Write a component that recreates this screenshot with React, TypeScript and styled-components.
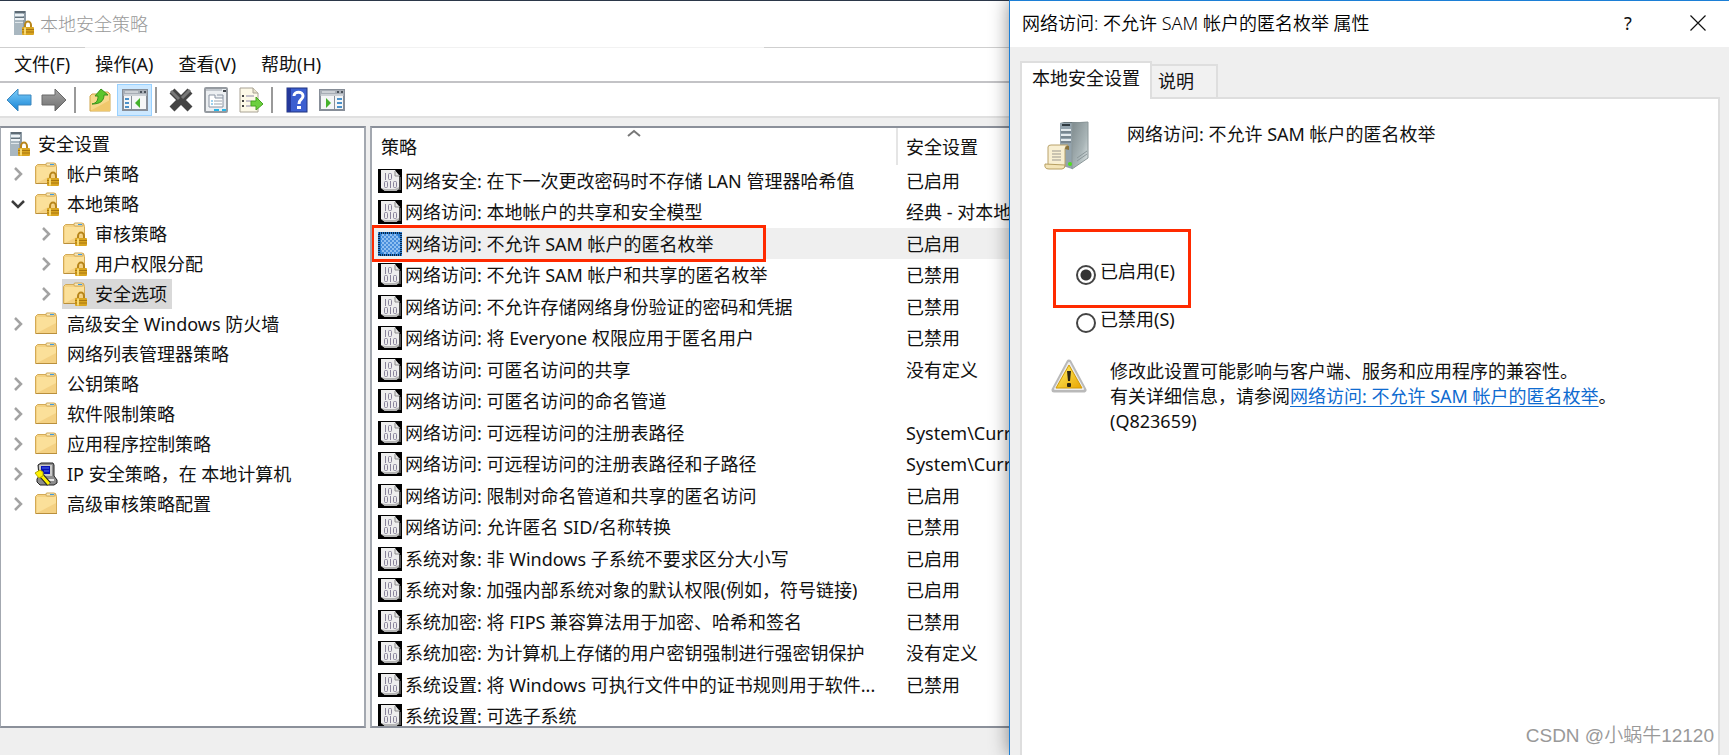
import React from "react";
import styled, { createGlobalStyle } from "styled-components";

const GlobalStyle = createGlobalStyle`
  * { box-sizing: border-box; }
  html, body { margin: 0; padding: 0; }
  body {
    font-family: "Noto Sans", "Noto Sans CJK SC", sans-serif;
    font-size: 18px;
    line-height: 24px;
    color: #111;
    background: #efefef;
  }
  button, input { font: inherit; color: inherit; }
`;

/* ---------- icons ---------- */

const LockShape = ({ x, y }: { x: number; y: number }) => (
  <g transform={`translate(${x} ${y})`}>
    <path d="M3 7V4a3 3.4 0 0 1 6 0v3" fill="none" stroke="#b8861b" strokeWidth="2" />
    <rect x="0" y="6" width="12" height="8" rx="1" fill="#d9a520" />
    <path d="M0 8.500h12M0 11h12" stroke="#a9770f" strokeWidth="1" />
    <rect x="2" y="6.500" width="2" height="7" fill="#f6d873" />
  </g>
);

const ServerLockIcon = () => (
  <svg width="22" height="26" viewBox="0 0 22 26" aria-hidden="true">
    <rect x="1" y="1" width="12" height="24" fill="#8e9ba5" />
    <rect x="1" y="1" width="9" height="24" fill="#a9b7c0" />
    <rect x="2" y="1" width="10" height="2" fill="#5d6a74" />
    <rect x="2" y="4" width="9" height="2" fill="#eef3f6" />
    <rect x="2" y="8" width="9" height="2" fill="#eef3f6" />
    <rect x="2" y="12" width="8" height="1" fill="#dfe6ea" />
    <rect x="2" y="7" width="9" height="1" fill="#64727c" />
    <LockShape x={9} y={11} />
  </svg>
);

const FolderIcon = ({ locked }: { locked?: boolean }) => (
  <svg width="26" height="26" viewBox="0 0 26 26" aria-hidden="true">
    <path d="M1.500 5.500l2-2h9v-1h9l1 3v17h-21z" fill="#f4d283" stroke="#d3aa56" />
    <path d="M2 22.500h21" stroke="#b98f3c" />
    <rect x="12" y="2" width="9" height="3" rx="1" fill="#fbeabb" stroke="#cda758" strokeWidth="1" />
    <rect x="16" y="3" width="4" height="1" fill="#3d9be0" />
    <rect x="3" y="6" width="19" height="16" fill="#fbe09a" />
    <path d="M3 22h19V12z" fill="#f4d183" />
    {locked && <LockShape x={13} y={11} />}
  </svg>
);

const IpPolicyIcon = () => (
  <svg width="26" height="26" viewBox="0 0 26 26" aria-hidden="true">
    <path d="M4 4l3-2h12l1 2v11l3 4v3l-3 2H6l-3-3v-3l2-3z" fill="#8d8d8d" stroke="#222" />
    <rect x="5" y="4" width="13" height="11" fill="#c9c9c9" />
    <rect x="7" y="5" width="9" height="8" fill="#0a12b4" />
    <path d="M8 7h7M10 10h5" stroke="#4d6ff2" strokeWidth="1" />
    <path d="M12 19h8" stroke="#e6e6e6" strokeWidth="2" />
    <path d="M7 14l8 9" stroke="#222" strokeWidth="5" />
    <path d="M6 13l9 10" stroke="#fff200" strokeWidth="3" />
    <path d="M1 12l5-3 3 2v4l-4 2z" fill="#fff200" stroke="#b1a800" strokeWidth="1" />
  </svg>
);

const PolicyIcon = ({ selected }: { selected?: boolean }) =>
  selected ? (
    <svg width="24" height="24" viewBox="0 0 24 24" aria-hidden="true">
      <defs>
        <pattern id="dither" width="4" height="4" patternUnits="userSpaceOnUse">
          <rect width="4" height="4" fill="#8fc0f2" />
          <rect width="2" height="2" fill="#4a8fdc" />
          <rect x="2" y="2" width="2" height="2" fill="#4a8fdc" />
        </pattern>
      </defs>
      <rect width="24" height="24" fill="#2c7fd2" />
      <rect x="1" y="1" width="22" height="22" fill="none" stroke="#06284e" strokeWidth="2" strokeDasharray="1 1" />
      <path d="M3 2h16l3 5v12l-3 3H6l-3-2z" fill="url(#dither)" />
    </svg>
  ) : (
    <svg width="24" height="24" viewBox="0 0 24 24" aria-hidden="true">
      <rect width="24" height="24" fill="#000" />
      <path d="M3 1h14l4 6v13l-3 2H7l-4-3z" fill="#eee" />
      <path d="M3 19l4 3h11l3-2v-2l-4 2H7z" fill="#b5b5b5" />
      <path d="M17 2v5h5" fill="#e3e3e3" stroke="#8c8c8c" />
      <path d="M22 8v13" stroke="#999" />
      <g fill="none" stroke="#88829a">
        <path d="M7.500 4v7" />
        <rect x="10.500" y="4.500" width="3" height="6" rx="1" />
        <rect x="6.500" y="12.500" width="3" height="6" rx="1" />
        <path d="M12.500 12v7" />
        <rect x="15.500" y="12.500" width="3" height="6" rx="1" />
      </g>
    </svg>
  );

const Chevron = ({ open }: { open?: boolean }) => (
  <svg width="14" height="14" viewBox="0 0 14 14" aria-hidden="true">
    {open ? (
      <path d="M1 4l6 6 6-6" fill="none" stroke="#3c3c3c" strokeWidth="2.500" />
    ) : (
      <path d="M4 1l6 6-6 6" fill="none" stroke="#a3a3a3" strokeWidth="2.500" />
    )}
  </svg>
);

const ArrowIcon = ({ forward }: { forward?: boolean }) => (
  <svg width="26" height="24" viewBox="0 0 26 24" aria-hidden="true">
    <defs>
      <linearGradient id={forward ? "gf" : "gb"} x1="0" y1="0" x2="0" y2="1">
        <stop offset="0" stopColor={forward ? "#a5a5a5" : "#7fd0fb"} />
        <stop offset="1" stopColor={forward ? "#6f6f6f" : "#1682d4"} />
      </linearGradient>
    </defs>
    <path
      d={forward ? "M25 12L14 1v6H1v10h13v6z" : "M1 12L12 1v6h13v10H12v6z"}
      fill={`url(#${forward ? "gf" : "gb"})`}
      stroke={forward ? "#686868" : "#3c87bd"}
      strokeLinejoin="round"
    />
  </svg>
);

const FolderUpIcon = () => (
  <svg width="24" height="26" viewBox="0 0 24 26" aria-hidden="true">
    <path d="M2 9l2-2h6l2-2h8l2 2v17H2z" fill="#f7d88b" stroke="#cfa54b" />
    <path d="M2 24h20V13z" fill="#f0c86c" />
    <path d="M4 17c5-1 6-4 6-8H7l6-7 7 6h-4c0 6-4 9-12 9z" fill="#5cc62c" stroke="#39921a" strokeWidth="1" />
  </svg>
);

const ConsoleIcon = ({ flipped }: { flipped?: boolean }) => (
  <svg width="26" height="22" viewBox="0 0 26 22" aria-hidden="true">
    <rect x="1" y="1" width="24" height="20" fill="#f5f6f7" stroke="#878e98" strokeWidth="2" />
    <rect x="1" y="1" width="24" height="6" fill="#a7adb5" />
    <path d="M3 3h13M2 6h22" stroke="#f1f3f5" />
    <path d="M18 3h2M22 3h2" stroke="#4b525b" strokeWidth="2" />
    <path d={flipped ? "M15.500 7v13" : "M9.500 7v13"} stroke="#878e98" />
    <path d={flipped ? "M18 10h5M18 14h5M18 18h5" : "M3 10h4M3 14h4M3 18h4"} stroke="#4b91c9" strokeWidth="2" />
    <path d={flipped ? "M7 9v10l5-5z" : "M18 9v10l-5-5z"} fill="#45b12a" />
  </svg>
);

const DeleteIcon = () => (
  <svg width="26" height="26" viewBox="0 0 26 26" aria-hidden="true">
    <path d="M4 4l18 18M22 4L4 22" stroke="#444" strokeWidth="7" />
    <path d="M3 4l8 8M22 3l-8 8" stroke="#777" strokeWidth="3" />
  </svg>
);

const PropertiesIcon = () => (
  <svg width="24" height="26" viewBox="0 0 24 26" aria-hidden="true">
    <rect x="1" y="1" width="22" height="24" rx="1" fill="#eceff2" stroke="#969ba1" strokeWidth="2" />
    <path d="M2 3h16" stroke="#c3c8ce" strokeWidth="2" />
    <path d="M19 4h3" stroke="#42474d" strokeWidth="2" />
    <path d="M5 8h6v3h8v9H5z" fill="#fff" stroke="#8a94a3" />
    <path d="M13 8h6v3" fill="none" stroke="#8a94a3" />
    <path d="M7 14h2M7 17h2" stroke="#3ba3dd" strokeWidth="1" />
    <path d="M10 14h8M10 17h8" stroke="#9aa3ad" />
    <path d="M10 23h5M18 23h4" stroke="#25b6ea" strokeWidth="2" />
  </svg>
);

const ExportIcon = () => (
  <svg width="26" height="26" viewBox="0 0 26 26" aria-hidden="true">
    <path d="M2 1h13l5 5v19H2z" fill="#fdf9e8" stroke="#a8a294" />
    <path d="M15 1v5h5" fill="#e7e1cc" stroke="#a8a294" />
    <path d="M4 9h2M4 14h2M4 19h2" stroke="#444" strokeWidth="2" />
    <path d="M8 9h8M8 14h5M8 19h5" stroke="#8c86a8" strokeWidth="1" />
    <path d="M13 14h5v-4l7 7-7 6v-4h-5z" fill="#6cd03f" stroke="#45a320" />
  </svg>
);

const HelpIcon = () => (
  <svg width="22" height="26" viewBox="0 0 22 26" aria-hidden="true">
    <rect x="1" y="1" width="20" height="24" fill="#3c5fd0" stroke="#20347f" />
    <rect x="1" y="1" width="4" height="24" fill="#24389a" />
    <path d="M8 9c0-5 9-5 9 0 0 4-4 3-4 8" fill="none" stroke="#fff" strokeWidth="3" />
    <rect x="11" y="19" width="4" height="3" fill="#fff" />
  </svg>
);

const ServerScrollIcon = () => (
  <svg width="46" height="50" viewBox="0 0 46 50" aria-hidden="true">
    <defs>
      <linearGradient id="side" x1="0" y1="0" x2="1" y2="1">
        <stop offset="0" stopColor="#7d898c" />
        <stop offset="0.6" stopColor="#a9b5b7" />
        <stop offset="1" stopColor="#e6ecec" />
      </linearGradient>
    </defs>
    <path d="M16 2l4-1h24l-16 3H16z" fill="#6b787c" />
    <path d="M16 2h12v46l-12-4z" fill="#93a3ad" />
    <path d="M28 2l16-1v36L28 48z" fill="url(#side)" stroke="#8b9799" strokeWidth="1" />
    <path d="M18 4h8" stroke="#2f3a40" strokeWidth="2" />
    <path d="M17 9h10M17 14h10M17 19h10" stroke="#e3eaed" strokeWidth="2" />
    <path d="M17 11h10M17 16h10M17 21h10" stroke="#5c6a73" />
    <path d="M33 40l10-7M33 37l10-7" stroke="#8a9699" />
    <path d="M4 26q0-2 3-2h17q-3 1-3 4v18H4z" fill="#f8efd2" stroke="#b9a26a" />
    <path d="M21 28q1-4 4-3v4z" fill="#8a733a" />
    <path d="M8 30h9M8 33h9M8 36h9M8 39h9" stroke="#9b978f" />
    <path d="M1 43q-1 5 4 5h13q3 0 3-4z" fill="#f3e4b7" stroke="#b79f62" />
    <circle cx="26" cy="43" r="2" fill="#4fe01c" />
  </svg>
);

const WarningIcon = () => (
  <svg width="36" height="34" viewBox="0 0 36 34" aria-hidden="true">
    <defs>
      <linearGradient id="warn" x1="0" y1="0" x2="1" y2="1">
        <stop offset="0" stopColor="#fff36b" />
        <stop offset="1" stopColor="#e9a400" />
      </linearGradient>
    </defs>
    <path d="M18 3L33 31H3z" fill="#b9b9b9" stroke="#b9b9b9" strokeWidth="5" strokeLinejoin="round" />
    <path d="M18 4L32 30H4z" fill="#ececec" stroke="#ececec" strokeWidth="2" strokeLinejoin="round" />
    <path d="M18 6L31 29H5z" fill="url(#warn)" stroke="#d29b08" strokeWidth="1" strokeLinejoin="round" />
    <path d="M16 12h4l-1 10h-2z" fill="#2b2410" />
    <rect x="16" y="24" width="4" height="4" rx="1" fill="#2b2410" />
  </svg>
);

/* ---------- layout ---------- */

const Desktop = styled.div`
  display: grid;
  grid-template-columns: minmax(0, 1009fr) minmax(0, 720fr);
  height: 100vh;
  overflow: hidden;
`;

const ConsoleWindow = styled.main`
  display: flex;
  flex-direction: column;
  min-height: 0;
  overflow: hidden;
  border-top: 1px solid #2b3749;
  background: #efefef;
`;

const ConsoleTitle = styled.header`
  display: flex;
  align-items: center;
  gap: 5px;
  height: 47px;
  padding: 0 0 4px 13px;
  color: #999;
  font-family: "Noto Sans CJK SC", sans-serif;
  font-weight: 300;
  background:
    linear-gradient(90deg, #cfcfcf 0 85px, #f2f2f2 85px 764px, #cfcfcf 764px) bottom / 100% 1px no-repeat,
    #fff;
`;

const MenuBar = styled.nav`
  display: flex;
  gap: 25px;
  height: 35px;
  padding: 0 14px 2px;
  border-bottom: 2px solid #c3c3c6;
  background: #fff;
`;

const MenuItem = styled.button`
  padding: 0;
  border: 0;
  background: none;
`;

const Toolbar = styled.div`
  display: flex;
  align-items: flex-end;
  height: 35px;
  padding: 0 1px;
  border-bottom: 2px solid #e0e0e0;
  background: #fff;
`;

const ToolButton = styled.button<{ $active?: boolean }>`
  display: flex;
  align-items: center;
  justify-content: center;
  width: 35px;
  height: 32px;
  padding: 0;
  border: 1px solid ${(p) => (p.$active ? "#99d1ff" : "transparent")};
  background: ${(p) => (p.$active ? "#cce8ff" : "none")};
`;

const ToolGroup = styled.div`
  display: flex;
`;

const ToolSeparator = styled.span`
  width: 2px;
  height: 26px;
  margin: 0 6px 3px 3px;
  background: #999;
`;

const Panels = styled.div`
  display: grid;
  grid-template-columns: 366px minmax(0, 1fr);
  gap: 4px;
  flex: 1;
  min-height: 0;
  padding: 8px 0 27px;
`;

const Panel = styled.section`
  overflow: hidden;
  border: 2px solid #959aa3;
  border-color: #8b909a #a3a8b0 #8b909a #a3a8b0;
  background: #fff;
`;

const TreePanel = styled(Panel)`
  border-left-width: 1px;
`;

const ListPanel = styled(Panel)`
  border-right: 0;
`;

const Tree = styled.ul`
  margin: 0;
  padding: 1px 0 0;
  list-style: none;
`;

const TreeRow = styled.li<{ $level: number }>`
  display: flex;
  align-items: center;
  height: 30px;
  padding-left: ${(p) => (p.$level === 0 ? 8 : 10 + (p.$level - 1) * 28)}px;
`;

const Twisty = styled.span`
  display: flex;
  width: 23px;
`;

const TreeLabel = styled.span<{ $selected?: boolean }>`
  display: flex;
  align-items: center;
  gap: 7px;
  height: 30px;
  padding-right: 5px;
  background: ${(p) => (p.$selected ? "#d9d9d9" : "none")};
`;

const PolicyTable = styled.table`
  width: 100%;
  border-collapse: collapse;
  table-layout: fixed;
`;

const NameHead = styled.th`
  position: relative;
  width: 525px;
  height: 37px;
  padding: 0 0 0 9px;
  font-weight: 400;
  text-align: left;
`;

const SortMark = styled.svg`
  position: absolute;
  top: 1px;
  left: 50%;
  transform: translateX(-50%);
`;

const ValueHead = styled.th`
  height: 37px;
  padding: 0 0 0 8px;
  border-left: 2px solid #e5e5e5;
  font-weight: 400;
  text-align: left;
`;

const PolicyRow = styled.tr<{ $selected?: boolean }>`
  height: 31px;
  background: ${(p) => (p.$selected ? "#efefef" : "none")};
  &:nth-child(even) { height: 32px; }
`;

const NameCell = styled.td`
  position: relative;
  padding: 0;
`;

const NameContent = styled.div`
  display: flex;
  align-items: center;
  gap: 3px;
  padding-left: 6px;
  white-space: nowrap;
`;

const NameText = styled.span`
  overflow: hidden;
  text-overflow: ellipsis;
`;

const ValueCell = styled.td`
  overflow: hidden;
  padding: 0 0 0 9px;
  white-space: nowrap;
`;

const RowHighlight = styled.span`
  position: absolute;
  inset: -3px 131px -3px -1px;
  border: 3px solid #ff2a00;
  pointer-events: none;
`;

const Dialog = styled.section`
  position: relative;
  display: flex;
  flex-direction: column;
  min-height: 0;
  border-top: 1px solid #1c7fd6;
  border-left: 1px solid #1c7fd6;
  background: #efefef;
  box-shadow: 0 0 18px rgba(0, 0, 0, 0.45);
`;

const DialogTitle = styled.header`
  display: flex;
  align-items: center;
  height: 46px;
  padding: 0 8px 2px 12px;
  background: #fff;
`;

const TitleText = styled.h1`
  flex: 1;
  margin: 0;
  color: #000;
  font-size: 18px;
  font-weight: 350;
`;

const TitleButton = styled.button`
  display: flex;
  align-items: center;
  justify-content: center;
  width: 46px;
  height: 40px;
  padding: 0;
  border: 0;
  background: none;
`;

const TitleButtons = styled.div`
  display: flex;
  gap: 24px;
`;

const DialogBody = styled.div`
  display: flex;
  flex-direction: column;
  flex: 1;
  min-height: 0;
  padding: 14px 9px 0 10px;
`;

const Tabs = styled.div`
  display: flex;
  align-items: flex-end;
`;

const Tab = styled.button<{ $active?: boolean }>`
  position: relative;
  height: ${(p) => (p.$active ? 38 : 33)}px;
  margin-bottom: ${(p) => (p.$active ? -2 : 0)}px;
  padding: ${(p) => (p.$active ? "0 10px 6px" : "0 22px 2px 6px")};
  border: 2px solid #dedede;
  border-bottom: 0;
  border-left-width: ${(p) => (p.$active ? 2 : 0)}px;
  background: ${(p) => (p.$active ? "#fff" : "#f1f1f1")};
`;

const TabPanel = styled.div`
  display: flex;
  flex-direction: column;
  flex: 1;
  min-height: 0;
  padding: 22px 28px 0 22px;
  border: 2px solid #dedede;
  border-bottom: 0;
  background: #fff;
`;

const PolicyHeading = styled.div`
  display: flex;
  gap: 37px;
`;

const HeadingText = styled.h2`
  margin: 1px 0 0;
  font-size: 18px;
  font-weight: 400;
`;

const Choices = styled.fieldset`
  display: flex;
  flex-direction: column;
  align-items: flex-start;
  gap: 22px;
  margin: 88px 0 0;
  padding: 0 0 0 32px;
  border: 0;
`;

const Choice = styled.label`
  position: relative;
  display: flex;
  align-items: flex-start;
  gap: 4px;
`;

const Radio = styled.input`
  appearance: none;
  width: 20px;
  height: 20px;
  margin: 6px 0 0;
  border: 2px solid #444;
  border-radius: 50%;
  background: #fff;
  &:checked { background: radial-gradient(circle, #333 0 5px, #fff 6px); }
`;

const ChoiceHighlight = styled.span`
  position: absolute;
  inset: -30px -16px -23px -23px;
  border: 3px solid #ff2a00;
  pointer-events: none;
`;

const Notice = styled.div`
  display: flex;
  gap: 23px;
  margin-top: 26px;
  padding-left: 7px;
`;

const NoticeText = styled.p`
  margin: 0;
  line-height: 25px;
`;

const Link = styled.a`
  color: #0f6bd0;
  text-underline-offset: 3px;
`;

const Watermark = styled.div`
  position: absolute;
  right: 15px;
  bottom: 5px;
  color: #999;
  font-family: "Liberation Sans", "Noto Sans CJK SC", sans-serif;
  font-size: 19px;
  font-weight: 350;
  line-height: 28px;
`;

/* ---------- data ---------- */

type Node = { label: string; level: number; icon: "root" | "locked" | "folder" | "ip"; state?: "open" | "closed"; selected?: boolean };

const nodes: Node[] = [
  { label: "安全设置", level: 0, icon: "root" },
  { label: "帐户策略", level: 1, icon: "locked", state: "closed" },
  { label: "本地策略", level: 1, icon: "locked", state: "open" },
  { label: "审核策略", level: 2, icon: "locked", state: "closed" },
  { label: "用户权限分配", level: 2, icon: "locked", state: "closed" },
  { label: "安全选项", level: 2, icon: "locked", state: "closed", selected: true },
  { label: "高级安全 Windows 防火墙", level: 1, icon: "folder", state: "closed" },
  { label: "网络列表管理器策略", level: 1, icon: "folder" },
  { label: "公钥策略", level: 1, icon: "folder", state: "closed" },
  { label: "软件限制策略", level: 1, icon: "folder", state: "closed" },
  { label: "应用程序控制策略", level: 1, icon: "folder", state: "closed" },
  { label: "IP 安全策略，在 本地计算机", level: 1, icon: "ip", state: "closed" },
  { label: "高级审核策略配置", level: 1, icon: "folder", state: "closed" },
];

const SELECTED = "网络访问: 不允许 SAM 帐户的匿名枚举";

const policies: [string, string][] = [
  ["网络安全: 在下一次更改密码时不存储 LAN 管理器哈希值", "已启用"],
  ["网络访问: 本地帐户的共享和安全模型", "经典 - 对本地"],
  [SELECTED, "已启用"],
  ["网络访问: 不允许 SAM 帐户和共享的匿名枚举", "已禁用"],
  ["网络访问: 不允许存储网络身份验证的密码和凭据", "已禁用"],
  ["网络访问: 将 Everyone 权限应用于匿名用户", "已禁用"],
  ["网络访问: 可匿名访问的共享", "没有定义"],
  ["网络访问: 可匿名访问的命名管道", ""],
  ["网络访问: 可远程访问的注册表路径", "System\\Curr"],
  ["网络访问: 可远程访问的注册表路径和子路径", "System\\Curr"],
  ["网络访问: 限制对命名管道和共享的匿名访问", "已启用"],
  ["网络访问: 允许匿名 SID/名称转换", "已禁用"],
  ["系统对象: 非 Windows 子系统不要求区分大小写", "已启用"],
  ["系统对象: 加强内部系统对象的默认权限(例如，符号链接)", "已启用"],
  ["系统加密: 将 FIPS 兼容算法用于加密、哈希和签名", "已禁用"],
  ["系统加密: 为计算机上存储的用户密钥强制进行强密钥保护", "没有定义"],
  ["系统设置: 将 Windows 可执行文件中的证书规则用于软件...", "已禁用"],
  ["系统设置: 可选子系统", ""],
];

const treeIcon = {
  root: <ServerLockIcon />,
  locked: <FolderIcon locked />,
  folder: <FolderIcon />,
  ip: <IpPolicyIcon />,
};

export default function App() {
  return (
    <>
      <GlobalStyle />
      <Desktop>
        <ConsoleWindow>
          <ConsoleTitle>
            <ServerLockIcon />
            本地安全策略
          </ConsoleTitle>
          <MenuBar>
            {["文件(F)", "操作(A)", "查看(V)", "帮助(H)"].map((m) => (
              <MenuItem key={m}>{m}</MenuItem>
            ))}
          </MenuBar>
          <Toolbar>
            <ToolGroup>
              <ToolButton aria-label="后退"><ArrowIcon /></ToolButton>
              <ToolButton aria-label="前进"><ArrowIcon forward /></ToolButton>
            </ToolGroup>
            <ToolSeparator />
            <ToolGroup>
              <ToolButton aria-label="上移"><FolderUpIcon /></ToolButton>
              <ToolButton aria-label="控制台树" $active><ConsoleIcon /></ToolButton>
            </ToolGroup>
            <ToolSeparator />
            <ToolGroup>
              <ToolButton aria-label="删除"><DeleteIcon /></ToolButton>
              <ToolButton aria-label="属性"><PropertiesIcon /></ToolButton>
              <ToolButton aria-label="导出"><ExportIcon /></ToolButton>
            </ToolGroup>
            <ToolSeparator />
            <ToolGroup>
              <ToolButton aria-label="帮助"><HelpIcon /></ToolButton>
              <ToolButton aria-label="操作窗格"><ConsoleIcon flipped /></ToolButton>
            </ToolGroup>
          </Toolbar>
          <Panels>
            <TreePanel>
              <Tree>
                {nodes.map((n) => (
                  <TreeRow key={n.label} $level={n.level}>
                    {n.level > 0 && <Twisty>{n.state && <Chevron open={n.state === "open"} />}</Twisty>}
                    <TreeLabel $selected={n.selected}>
                      {treeIcon[n.icon]}
                      {n.label}
                    </TreeLabel>
                  </TreeRow>
                ))}
              </Tree>
            </TreePanel>
            <ListPanel>
              <PolicyTable>
                <thead>
                  <tr>
                    <NameHead>
                      策略
                      <SortMark width="14" height="8" viewBox="0 0 14 8" aria-hidden="true">
                        <path d="M1 7l6-5 6 5" fill="none" stroke="#777" strokeWidth="2" />
                      </SortMark>
                    </NameHead>
                    <ValueHead>安全设置</ValueHead>
                  </tr>
                </thead>
                <tbody>
                  {policies.map(([name, value]) => (
                    <PolicyRow key={name} $selected={name === SELECTED}>
                      <NameCell>
                        <NameContent>
                          <PolicyIcon selected={name === SELECTED} />
                          <NameText>{name}</NameText>
                        </NameContent>
                        {name === SELECTED && <RowHighlight />}
                      </NameCell>
                      <ValueCell>{value}</ValueCell>
                    </PolicyRow>
                  ))}
                </tbody>
              </PolicyTable>
            </ListPanel>
          </Panels>
        </ConsoleWindow>
        <Dialog>
          <DialogTitle>
            <TitleText>{SELECTED} 属性</TitleText>
            <TitleButtons>
              <TitleButton aria-label="帮助">?</TitleButton>
              <TitleButton aria-label="关闭">
                <svg width="16" height="16" viewBox="0 0 16 16" aria-hidden="true">
                  <path d="M0.500 0.500l15 15M15.500 0.500l-15 15" stroke="#111" strokeWidth="1.200" />
                </svg>
              </TitleButton>
            </TitleButtons>
          </DialogTitle>
          <DialogBody>
            <Tabs>
              <Tab $active>本地安全设置</Tab>
              <Tab>说明</Tab>
            </Tabs>
            <TabPanel>
              <PolicyHeading>
                <ServerScrollIcon />
                <HeadingText>{SELECTED}</HeadingText>
              </PolicyHeading>
              <Choices>
                <Choice>
                  <Radio type="radio" name="state" defaultChecked />
                  已启用(E)
                  <ChoiceHighlight />
                </Choice>
                <Choice>
                  <Radio type="radio" name="state" />
                  已禁用(S)
                </Choice>
              </Choices>
              <Notice>
                <WarningIcon />
                <NoticeText>
                  修改此设置可能影响与客户端、服务和应用程序的兼容性。
                  <br />
                  有关详细信息，请参阅<Link href="#">{SELECTED}</Link>。
                  <br />
                  (Q823659)
                </NoticeText>
              </Notice>
            </TabPanel>
          </DialogBody>
          <Watermark>CSDN @小蜗牛12120</Watermark>
        </Dialog>
      </Desktop>
    </>
  );
}
